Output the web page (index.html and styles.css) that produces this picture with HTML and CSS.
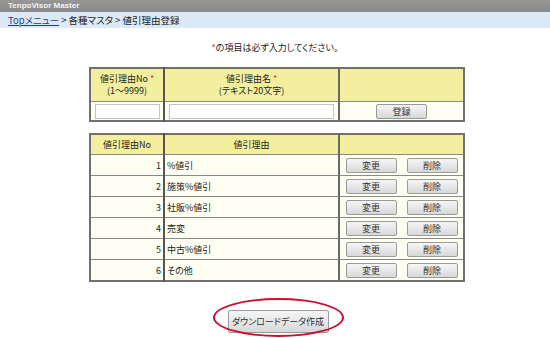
FILE: index.html
```html
<!DOCTYPE html>
<html>
<head>
  <title>値引理由登録</title>
  <link rel="stylesheet" href="styles.css">
</head>
<body>

  <!-- Title bar -->
  <div class="titlebar">TenpoVisor Master</div>

  <!-- Breadcrumb -->
  <div class="crumb">
    <a href="#">Topメニュー</a> &gt; 各種マスタ &gt; 値引理由登録
  </div>

  <p class="note"><span class="req">*</span>の項目は必ず入力してください。</p>

  <!-- Entry form -->
  <table class="grid entry">
    <colgroup>
      <col class="c1"><col class="c2"><col class="c3">
    </colgroup>
    <tr class="head tall">
      <th>値引理由No <span class="req">*</span><br>(1〜9999)</th>
      <th>値引理由名 <span class="req">*</span><br>(テキスト20文字)</th>
      <th></th>
    </tr>
    <tr class="form-row">
      <td class="ctr"><input type="text" class="in-no"></td>
      <td class="ctr"><input type="text" class="in-name"></td>
      <td class="ctr"><button class="btn">登録</button></td>
    </tr>
  </table>

  <!-- List -->
  <table class="grid list">
    <colgroup>
      <col class="c1"><col class="c2"><col class="c3">
    </colgroup>
    <tr class="head">
      <th>値引理由No</th>
      <th>値引理由</th>
      <th></th>
    </tr>
    <tr><td class="num">1</td><td>%値引</td><td class="ctr"><button class="btn">変更</button><button class="btn">削除</button></td></tr>
    <tr><td class="num">2</td><td>施策%値引</td><td class="ctr"><button class="btn">変更</button><button class="btn">削除</button></td></tr>
    <tr><td class="num">3</td><td>社販%値引</td><td class="ctr"><button class="btn">変更</button><button class="btn">削除</button></td></tr>
    <tr><td class="num">4</td><td>売変</td><td class="ctr"><button class="btn">変更</button><button class="btn">削除</button></td></tr>
    <tr><td class="num">5</td><td>中古%値引</td><td class="ctr"><button class="btn">変更</button><button class="btn">削除</button></td></tr>
    <tr><td class="num">6</td><td>その他</td><td class="ctr"><button class="btn">変更</button><button class="btn">削除</button></td></tr>
  </table>

  <div class="dl">
    <button class="btn btn-dl">ダウンロードデータ作成</button>
    <span class="mark"></span>
  </div>

</body>
</html>
```

FILE: styles.css
```css
body {
  margin: 0;
  font-family: "Noto Sans CJK JP", "Liberation Sans", sans-serif;
  font-size: 9px;
  font-feature-settings: "palt";
  color: #222;
  background: #fff;
}

.titlebar {
  height: 12px;
  line-height: 12px;
  padding-left: 8px;
  background: linear-gradient(#979797, #888);
  color: #f4f4f4;
  font-family: "Liberation Sans", sans-serif;
  font-weight: bold;
  font-size: 8px;
}

.crumb {
  height: 16px;
  line-height: 16px;
  padding-left: 8px;
  background: #dde9f7;
  font-size: 9.5px;
}

.crumb a {
  color: #1a3d9c;
}

.note {
  margin: 14px 0 0;
  text-align: center;
  height: 12px;
  line-height: 12px;
}

.req {
  color: #e0302f;
}

.grid {
  table-layout: fixed;
  border-collapse: collapse;
  width: 374px;
  margin: 0 auto;
  position: relative;
  left: 2px;
  border: 2px solid #707070;
}

.entry {
  margin-top: 13px;
}

.list {
  margin-top: 11px;
}

.c1 { width: 74px; }
.c2 { width: 175px; }
.c3 { width: 125px; }

.grid th,
.grid td {
  border: 1px solid #8a8a8a;
  padding: 0 2px;
  height: 20px;
  background: #fefef2;
  font-weight: normal;
  text-align: left;
}

.grid th {
  background: #f4ef9e;
  text-align: center;
  height: 19px;
}

.grid th:first-child,
.grid td:first-child {
  border-right: 2px solid #555;
}

.grid th:nth-child(2),
.grid td:nth-child(2) {
  border-right: 2px solid #6a6a6a;
}

.tall th {
  height: 32px;
  line-height: 12px;
}

.form-row td {
  height: 18px;
}

.num {
  text-align: right !important;
}

.ctr {
  text-align: center !important;
  padding: 0 !important;
}

input {
  height: 15px;
  box-sizing: border-box;
  border: 1px solid #c4c4c4;
  background: #fff;
  margin: 0;
  vertical-align: middle;
}

.in-no { width: 65px; }
.in-name { width: 165px; }

.btn {
  width: 51px;
  height: 15px;
  padding: 0;
  font-family: inherit;
  font-size: 9px;
  font-feature-settings: "palt";
  color: #333;
  background: linear-gradient(#f6f6f6, #d8d8d8);
  border: 1px solid #9a9a9a;
  border-radius: 2px;
  vertical-align: middle;
}

.btn + .btn {
  margin-left: 10px;
}

.dl {
  position: relative;
  width: 131px;
  margin: 16px auto 0;
  left: 3px;
  padding: 12px 0 4px;
  text-align: center;
}

.btn-dl {
  width: 101px;
  height: 23px;
}

.mark {
  position: absolute;
  left: 0;
  top: 0;
  width: 131px;
  height: 39px;
  box-sizing: border-box;
  border: 2px solid #c8102e;
  border-radius: 50%;
}
```
